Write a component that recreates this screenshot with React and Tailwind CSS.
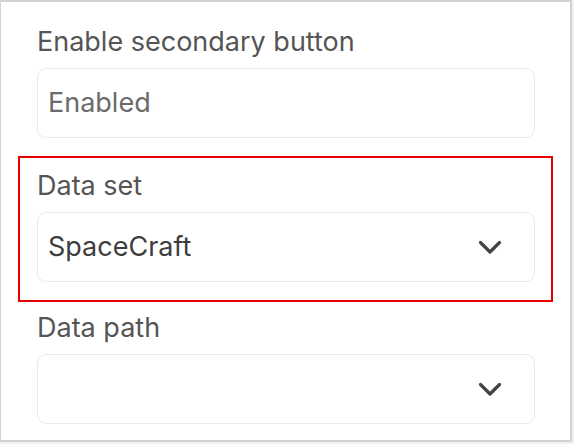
import React from 'react';

const Chevron = () => (
  <svg width="24" height="15" viewBox="0 0 24 15" fill="none" className="shrink-0">
    <path d="M2.5 2.5L12 12L21.5 2.5" stroke="#444444" strokeWidth="3.2" strokeLinecap="round" strokeLinejoin="round" />
  </svg>
);

const Field = ({ label, children }) => (
  <div className="flex flex-col">
    <label className="text-[27px] leading-[32px] text-[#555555] mb-[10px]">{label}</label>
    {children}
  </div>
);

const App = () => {
  return (
    <div className="w-[574px] h-[444px] bg-[#f2f2f2]" style={{ fontFamily: 'Inter, "Noto Sans", sans-serif' }}>
      <div className="w-[572px] h-[442px] bg-white border-[#d2d2d2] border-l border-t-2 border-r-2 border-b-2 pl-[36px] pr-[35px] pt-[24px] flex flex-col">
        <Field label="Enable secondary button">
          <div className="h-[70px] rounded-[9px] border border-[#ebebeb] flex items-center pl-[10px] text-[27px] text-[#6b6b6b]">
            Enabled
          </div>
        </Field>

        <div className="relative mt-[32px]">
          <div className="absolute -left-[19px] -right-[18px] -top-[14px] -bottom-[20px] border-2 border-[#e60000] pointer-events-none" />
          <Field label="Data set">
            <div className="h-[70px] rounded-[9px] border border-[#ebebeb] flex items-center justify-between pl-[10px] pr-[32px] text-[27px] text-[#3d3d3d]">
              <span>SpaceCraft</span>
              <Chevron />
            </div>
          </Field>
        </div>

        <div className="mt-[30px]">
          <Field label="Data path">
            <div className="h-[70px] rounded-[9px] border border-[#ebebeb] flex items-center justify-end pr-[32px]">
              <Chevron />
            </div>
          </Field>
        </div>
      </div>
    </div>
  );
};

export default App;
